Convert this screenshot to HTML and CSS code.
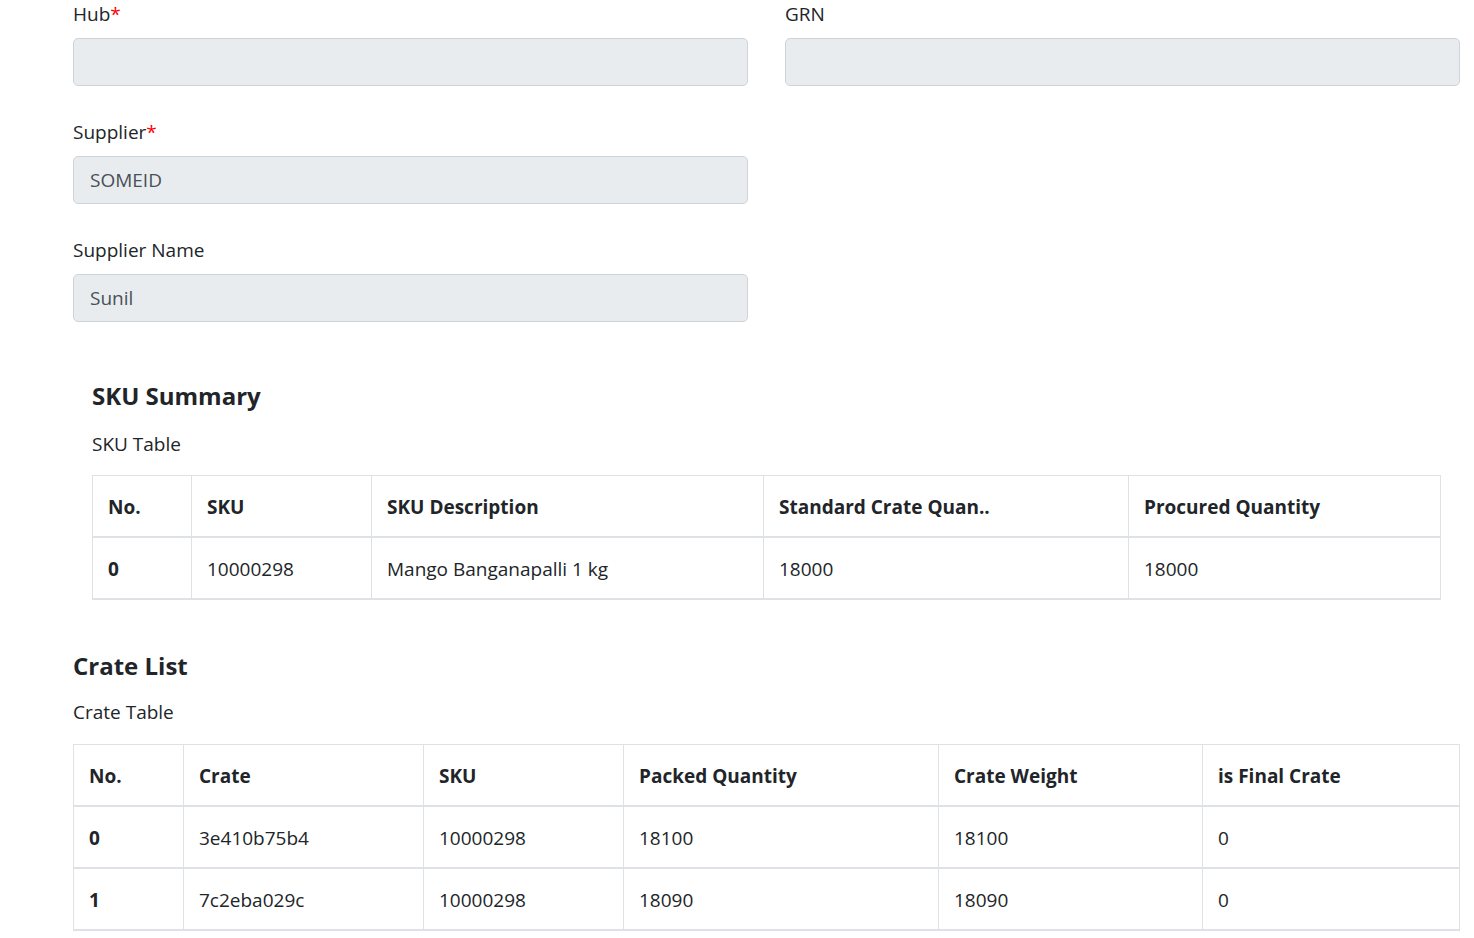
FILE: index.html
```html
<!DOCTYPE html>
<html lang="en">
<head>
<meta charset="utf-8">
<title>GRN</title>
<link rel="stylesheet" href="styles.css">
</head>
<body>
<main class="page">
  <section class="form-grid">
    <div class="col">
      <div class="field">
        <label class="label">Hub<span class="req">*</span></label>
        <div class="input"></div>
      </div>
      <div class="field">
        <label class="label">Supplier<span class="req">*</span></label>
        <div class="input">SOMEID</div>
      </div>
      <div class="field">
        <label class="label">Supplier Name</label>
        <div class="input">Sunil</div>
      </div>
    </div>
    <div class="col">
      <div class="field">
        <label class="label">GRN</label>
        <div class="input"></div>
      </div>
    </div>
  </section>

  <section class="section sku">
    <h2 class="heading">SKU Summary</h2>
    <p class="subheading">SKU Table</p>
    <table class="table sku-table">
      <thead>
        <tr><th>No.</th><th>SKU</th><th>SKU Description</th><th>Standard Crate Quan..</th><th>Procured Quantity</th></tr>
      </thead>
      <tbody>
        <tr><th>0</th><td>10000298</td><td>Mango Banganapalli 1 kg</td><td>18000</td><td>18000</td></tr>
      </tbody>
    </table>
  </section>

  <section class="section crate">
    <h2 class="heading">Crate List</h2>
    <p class="subheading">Crate Table</p>
    <table class="table crate-table">
      <thead>
        <tr><th>No.</th><th>Crate</th><th>SKU</th><th>Packed Quantity</th><th>Crate Weight</th><th>is Final Crate</th></tr>
      </thead>
      <tbody>
        <tr><th>0</th><td>3e410b75b4</td><td>10000298</td><td>18100</td><td>18100</td><td>0</td></tr>
        <tr><th>1</th><td>7c2eba029c</td><td>10000298</td><td>18090</td><td>18090</td><td>0</td></tr>
      </tbody>
    </table>
  </section>
</main>
</body>
</html>
```

FILE: styles.css
```css
* { box-sizing: border-box; }

html, body {
  margin: 0;
  padding: 0;
  background: #fff;
}

body {
  font-family: "Open Sans", "Noto Sans", "Liberation Sans", sans-serif;
  font-size: 19px;
  line-height: 1.5;
  color: #212529;
}

.page {
  padding: 0 14px 0 73px;
  margin-top: -10px;
}

.form-grid {
  display: grid;
  grid-template-columns: 675px 675px;
  column-gap: 37px;
  align-items: start;
}

.col {
  display: flex;
  flex-direction: column;
  gap: 22px;
}

.field {
  display: flex;
  flex-direction: column;
}

.label {
  padding: 9px 0;
  line-height: 30px;
}

.req { color: #ff0000; }

.input {
  height: 48px;
  padding: 8px 16px;
  line-height: 30px;
  background: #e9ecef;
  border: 1px solid #ced4da;
  border-radius: 5px;
  color: #495057;
}

.section { display: flex; flex-direction: column; }

.sku {
  padding: 0 19px;
  margin-top: 56px;
}

.crate {
  margin-top: 48px;
}

.heading {
  margin: 0;
  font-size: 24px;
  font-weight: 700;
  line-height: 36px;
}

.subheading {
  margin: 15px 0 0;
  line-height: 30px;
}

.crate .subheading { margin-top: 13px; }

.table {
  margin-top: 16px;
  width: 100%;
  border-collapse: collapse;
  table-layout: fixed;
  border: 1px solid #dee2e6;
  border-bottom-width: 2px;
}

.crate .table { margin-top: 17px; }

.table th,
.table td {
  text-align: left;
  padding: 16px 15px 14px;
  line-height: 30px;
  border: 1px solid #dee2e6;
  border-bottom-width: 2px;
  white-space: nowrap;
  overflow: hidden;
}

.table th { font-weight: 700; }

.sku-table th:nth-child(1) { width: 99px; }
.sku-table th:nth-child(2) { width: 180px; }
.sku-table th:nth-child(3) { width: 392px; }
.sku-table th:nth-child(4) { width: 365px; }

.crate-table th:nth-child(1) { width: 110px; }
.crate-table th:nth-child(2) { width: 240px; }
.crate-table th:nth-child(3) { width: 200px; }
.crate-table th:nth-child(4) { width: 315px; }
.crate-table th:nth-child(5) { width: 264px; }
```
